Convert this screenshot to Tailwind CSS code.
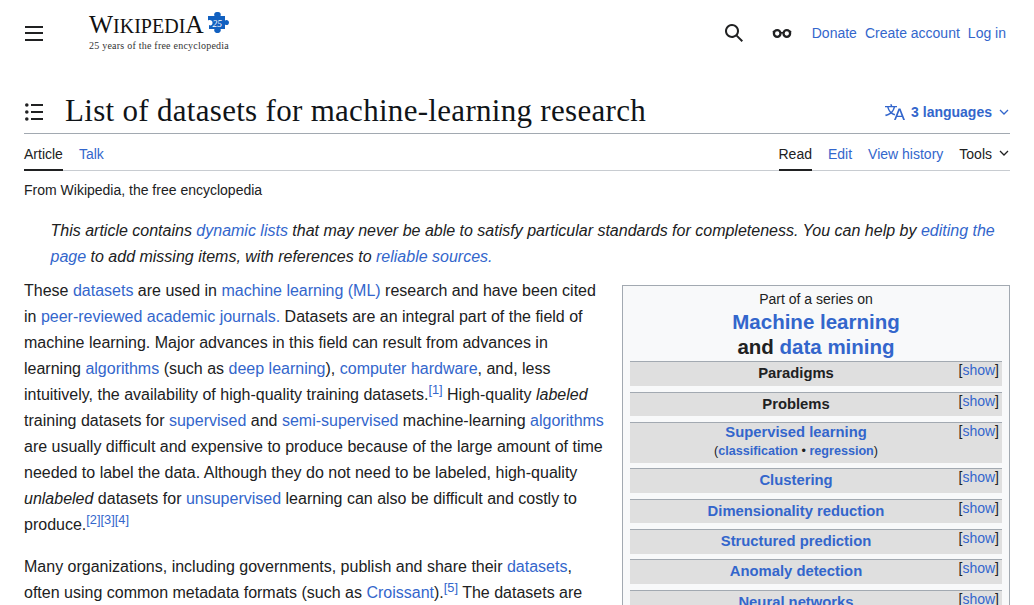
<!DOCTYPE html>
<html lang="en">
<head>
  <meta charset="UTF-8" />
  <title>List of datasets for machine-learning research</title>
  <script src="https://cdn.jsdelivr.net/npm/@tailwindcss/browser@4"></script>
</head>
<body class="bg-white text-[#202122] font-['Liberation_Sans',Arial,sans-serif] h-[605px] overflow-hidden">
  <header class="flex items-center h-[66px] pl-6 pr-7">
    <button class="w-5 h-5 flex flex-col justify-center gap-[4.5px] pl-px">
      <span class="block h-[2px] w-[18px] bg-[#202122]"></span>
      <span class="block h-[2px] w-[18px] bg-[#202122]"></span>
      <span class="block h-[2px] w-[18px] bg-[#202122]"></span>
    </button>
    <a class="ml-[45px] -mt-[2px] block w-[142px] font-['Liberation_Serif',serif]">
      <div class="flex items-center h-[24px]">
        <span class="text-[25.5px] leading-none text-[#111] whitespace-nowrap">W<span class="text-[20px]">IKIPEDI</span>A</span>
        <svg class="ml-[3px] -mt-[3px] shrink-0" width="22" height="22" viewBox="0 0 22 22">
          <path fill="#1160c0" d="M1 4h6.5C6.5 1.500 8 0 10.500 0s4 1.500 3 4H18v4.500c1.500-1.200 4-.5 4 2s-2.500 3.200-4 2V17h-4.500c1 1.800-.5 4-3 4s-4-2.200-3-4H2v-4c1.800 1 3.500 0 3.500-2.300S3 7.500 1 8.500z"/>
          <text x="5.500" y="14.500" fill="#fff" font-size="9.500" font-style="italic" font-family="Liberation Serif">25</text>
        </svg>
      </div>
      <div class="text-[10px] leading-3 mt-[3px] text-[#333] tracking-[0.23px] whitespace-nowrap">25 years of the free encyclopedia</div>
    </a>
    <div class="ml-auto flex items-center text-sm text-[#3366cc]">
      <svg class="mr-[28px]" width="20" height="20" viewBox="0 0 20 20" fill="#202122">
        <path d="M12.2 13.6a7 7 0 1 1 1.4-1.4l5.4 5.400-1.4 1.400zM3 8a5 5 0 1 0 10 0A5 5 0 0 0 3 8"/>
      </svg>
      <svg class="mr-[20px]" width="20" height="20" viewBox="0 0 20 20" fill="none" stroke="#202122" stroke-width="2.300">
        <circle cx="5.200" cy="10.500" r="3.300"/><circle cx="14.800" cy="10.500" r="3.300"/><path d="M8.500 9.800h3M1 9.500l1-1.500M19 9.500l-1-1.500" stroke-width="1.600"/>
      </svg>
      <a>Donate</a><a class="ml-2">Create account</a><a class="ml-2">Log in</a>
    </div>
  </header>

  <main class="px-6">
    <div class="flex items-center h-[68px] pt-[22px] border-b border-[#a2a9b1]">
      <svg width="20" height="20" viewBox="0 0 20 20" fill="#202122" class="mt-[3px]">
        <path d="M7 2h12v2H7zM7 9h12v2H7zM7 16h12v2H7z"/><circle cx="2.800" cy="3" r="1.800"/><circle cx="2.800" cy="10" r="1.800"/><circle cx="2.800" cy="17" r="1.800"/>
      </svg>
      <h1 class="ml-[21px] text-[31px] tracking-[0.3px] leading-[38px] font-['Liberation_Serif',serif] text-[#101418] whitespace-nowrap">List of datasets for machine-learning research</h1>
      <a class="ml-auto flex items-center text-sm font-bold text-[#3366cc] mt-[3px]">
        <svg class="mr-[6px]" width="20" height="20" viewBox="0 0 20 20" fill="#3366cc">
          <path d="M20 18h-1.44a.6.6 0 0 1-.4-.12.8.8 0 0 1-.23-.31L17 15h-5l-1 2.54a.8.8 0 0 1-.22.3.6.6 0 0 1-.4.14H9l4.55-11.47h1.89zm-3.53-4.31L14.89 9.5a12 12 0 0 1-.39-1.24q-.09.37-.19.69l-.19.56-1.58 4.19zm-6.3-1.58a13.4 13.4 0 0 1-2.91-1.41 11.5 11.5 0 0 0 2.81-5.37H12V4H7.31a4 4 0 0 0-.2-.56C6.87 2.79 6.6 2 6.6 2l-1.47.5s.4.89.6 1.5H0v1.33h2.15A11.2 11.2 0 0 0 5 10.7a17.2 17.2 0 0 1-5 2.1q.56.82.87 1.38a23.3 23.3 0 0 0 5.22-2.51 15.6 15.6 0 0 0 3.56 1.77zM3.63 5.33h4.91a8.1 8.1 0 0 1-2.45 4.45 9.1 9.1 0 0 1-2.46-4.45"/>
        </svg>
        3 languages
        <svg class="ml-[6px]" width="12" height="12" viewBox="0 0 12 12" fill="none" stroke="#3366cc" stroke-width="1.300"><path d="M2 4l4 4 4-4"/></svg>
      </a>
    </div>

    <nav class="flex h-[37px] border-b border-[#c8ccd1] text-sm">
      <a class="h-[37px] pt-[10px] border-b-2 border-[#202122]">Article</a>
      <a class="ml-4 pt-[10px] text-[#3366cc]">Talk</a>
      <a class="ml-auto h-[37px] pt-[10px] border-b-2 border-[#202122]">Read</a>
      <a class="ml-4 pt-[10px] text-[#3366cc]">Edit</a>
      <a class="ml-4 pt-[10px] text-[#3366cc]">View history</a>
      <a class="ml-4 pt-[10px] flex items-start">Tools
        <svg class="ml-[6px] mt-[3px]" width="12" height="12" viewBox="0 0 12 12" fill="none" stroke="#202122" stroke-width="1.300"><path d="M2 4l4 4 4-4"/></svg>
      </a>
    </nav>

    <p class="text-sm leading-[22px] mt-2">From Wikipedia, the free encyclopedia</p>

    <p class="italic text-base leading-[26px] pl-[26.5px] mt-[17px] mb-[8px]">This article contains <a class="text-[#3366cc]">dynamic lists</a> that may never be able to satisfy particular standards for completeness. You can help by <a class="text-[#3366cc]">editing the page</a> to add missing items, with references to <a class="text-[#3366cc]">reliable sources.</a></p>

    <aside class="float-right w-[388px] ml-4 mt-[7px] border border-[#a2a9b1] bg-[#f8f9fa] px-[7px] pt-[4px] text-center">
      <div class="text-sm leading-[18px]">Part of a series on</div>
      <div class="text-[20.5px] font-bold leading-[25px] mt-[1px]"><a class="text-[#3366cc]">Machine learning</a><br>and <a class="text-[#3366cc]">data mining</a></div>
      <div class="text-[14.8px] font-bold mt-[2px]">
        <div class="relative h-[25px] bg-[#dfdfdf] border-t border-[#a2a9b1] pr-[40px] pt-[1px] leading-[20px]">Paradigms<span class="absolute right-[3px] -top-[2px] font-normal text-sm">[<a class="text-[#3366cc]">show</a>]</span></div>
        <div class="relative h-[24px] mt-[6px] bg-[#dfdfdf] border-t border-[#a2a9b1] pr-[40px] pt-[1px] leading-[20px]">Problems<span class="absolute right-[3px] -top-[2px] font-normal text-sm">[<a class="text-[#3366cc]">show</a>]</span></div>
        <div class="relative h-[41px] mt-[6px] bg-[#dfdfdf] border-t border-[#a2a9b1] pr-[40px] leading-[18px]"><a class="text-[#3366cc]">Supervised learning</a><div class="text-[12.6px] leading-[19px] pt-px"><span class="font-normal">(</span><a class="text-[#3366cc]">classification</a> <span class="font-normal">•</span> <a class="text-[#3366cc]">regression</a><span class="font-normal">)</span></div><span class="absolute right-[3px] -top-[2px] font-normal text-sm">[<a class="text-[#3366cc]">show</a>]</span></div>
        <div class="relative h-[25px] mt-[5px] bg-[#dfdfdf] border-t border-[#a2a9b1] pr-[40px] pt-[1px] leading-[20px] text-[#3366cc]">Clustering<span class="absolute right-[3px] -top-[2px] font-normal text-sm text-[#202122]">[<a class="text-[#3366cc]">show</a>]</span></div>
        <div class="relative h-[24px] mt-[6px] bg-[#dfdfdf] border-t border-[#a2a9b1] pr-[40px] pt-[1px] leading-[20px] text-[#3366cc]">Dimensionality reduction<span class="absolute right-[3px] -top-[2px] font-normal text-sm text-[#202122]">[<a class="text-[#3366cc]">show</a>]</span></div>
        <div class="relative h-[25px] mt-[6px] bg-[#dfdfdf] border-t border-[#a2a9b1] pr-[40px] pt-[1px] leading-[20px] text-[#3366cc]">Structured prediction<span class="absolute right-[3px] -top-[2px] font-normal text-sm text-[#202122]">[<a class="text-[#3366cc]">show</a>]</span></div>
        <div class="relative h-[25px] mt-[5px] bg-[#dfdfdf] border-t border-[#a2a9b1] pr-[40px] pt-[1px] leading-[20px] text-[#3366cc]">Anomaly detection<span class="absolute right-[3px] -top-[2px] font-normal text-sm text-[#202122]">[<a class="text-[#3366cc]">show</a>]</span></div>
        <div class="relative h-[25px] mt-[6px] bg-[#dfdfdf] border-t border-[#a2a9b1] pr-[40px] pt-[1px] leading-[20px] text-[#3366cc]">Neural networks<span class="absolute right-[3px] -top-[2px] font-normal text-sm text-[#202122]">[<a class="text-[#3366cc]">show</a>]</span></div>
      </div>
    </aside>

    <p class="text-base leading-[26px] mb-[16px]">These <a class="text-[#3366cc]">datasets</a> are used in <a class="text-[#3366cc]">machine learning (ML)</a> research and have been cited in <a class="text-[#3366cc]">peer-reviewed academic journals.</a> Datasets are an integral part of the field of machine learning. Major advances in this field can result from advances in learning <a class="text-[#3366cc]">algorithms</a> (such as <a class="text-[#3366cc]">deep learning</a>), <a class="text-[#3366cc]">computer hardware</a>, and, less intuitively, the availability of high-quality training datasets.<sup class="text-[12.8px] text-[#3366cc]">[1]</sup> High-quality <i>labeled</i> training datasets for <a class="text-[#3366cc]">supervised</a> and <a class="text-[#3366cc]">semi-supervised</a> machine-learning <a class="text-[#3366cc]">algorithms</a> are usually difficult and expensive to produce because of the large amount of time needed to label the data. Although they do not need to be labeled, high-quality <i>unlabeled</i> datasets for <a class="text-[#3366cc]">unsupervised</a> learning can also be difficult and costly to produce.<sup class="text-[12.8px] text-[#3366cc]">[2][3][4]</sup></p>

    <p class="text-base leading-[26px]">Many organizations, including governments, publish and share their <a class="text-[#3366cc]">datasets</a>, often using common metadata formats (such as <a class="text-[#3366cc]">Croissant</a>).<sup class="text-[12.8px] text-[#3366cc]">[5]</sup> The datasets are</p>
  </main>
</body>
</html>
